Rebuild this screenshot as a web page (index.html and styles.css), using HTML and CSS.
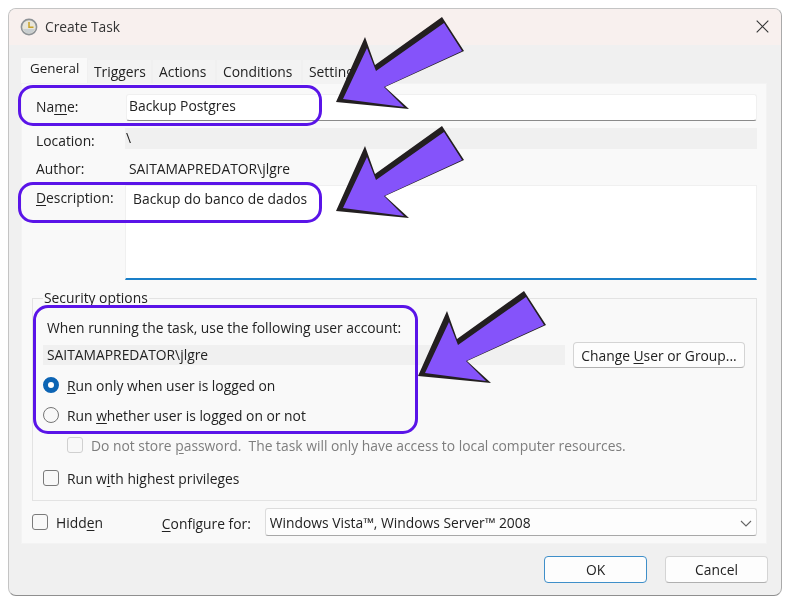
FILE: index.html
```html
<!DOCTYPE html>
<html lang="en">
<head>
<meta charset="utf-8">
<title>Create Task</title>
<link rel="stylesheet" href="styles.css">
</head>
<body>
<div class="window">
  <header class="titlebar">
    <svg class="clock" width="18" height="18" viewBox="0 0 18 18"><circle cx="9" cy="9" r="7.6" fill="#e9e6da" stroke="#8d9296" stroke-width="1.6"/><path d="M9 4v5.2h4.5" fill="none" stroke="#c9a227" stroke-width="1.5"/><path d="M3 11a6.4 6.4 0 0 0 12 0z" fill="#b9c3cc" opacity=".7"/></svg>
    <span class="title">Create Task</span>
    <svg class="close" width="13" height="13" viewBox="0 0 13 13"><path d="M.7.7l11.6 11.6M12.3.7L.7 12.3" stroke="#333" stroke-width="1.1" fill="none"/></svg>
  </header>
  <main class="content">
    <nav class="tabs">
      <span class="tab active">General</span>
      <span class="tab t2">Triggers</span>
      <span class="tab t3">Actions</span>
      <span class="tab t4">Conditions</span>
      <span class="tab t5">Settings</span>
    </nav>
    <section class="panel">
      <div class="row name-row">
        <label class="lab">Na<u>m</u>e:</label>
        <div class="input name-input">Backup Postgres</div>
      </div>
      <div class="row loc-row">
        <label class="lab">Location:</label>
        <div class="readonly">\</div>
      </div>
      <div class="row author-row">
        <label class="lab">Author:</label>
        <div class="plain">SAITAMAPREDATOR\jlgre</div>
      </div>
      <div class="row desc-row">
        <label class="lab desc-lab"><u>D</u>escription:</label>
        <div class="textarea">Backup do banco de dados</div>
      </div>
      <div class="group">
        <div class="legend">Security options</div>
        <div class="g-text">When running the task, use the following user account:</div>
        <div class="account">
          <div class="acc-field">SAITAMAPREDATOR\jlgre</div>
          <button class="btn change">Change <u>U</u>ser or Group...</button>
        </div>
        <div class="opt r1"><span class="radio on"></span><span><u>R</u>un only when user is logged on</span></div>
        <div class="opt r2"><span class="radio"></span><span>Run <u>w</u>hether user is logged on or not</span></div>
        <div class="opt r3 disabled"><span class="check dis"></span><span>Do not store <u>p</u>assword.&nbsp; The task will only have access to local computer resources.</span></div>
        <div class="opt r4"><span class="check"></span><span>Run w<u>i</u>th highest privileges</span></div>
      </div>
      <div class="bottom">
        <span class="check"></span>
        <span class="hidden-lab">Hidd<u>e</u>n</span>
        <label class="conf-lab"><u>C</u>onfigure for:</label>
        <div class="select">Windows Vista™, Windows Server™ 2008
          <svg class="chev" width="12" height="7" viewBox="0 0 12 7"><path d="M1 1l5 5 5-5" fill="none" stroke="#666" stroke-width="1.1"/></svg>
        </div>
      </div>
    </section>
    <footer class="actions">
      <button class="btn act default">OK</button>
      <button class="btn act">Cancel</button>
    </footer>
  </main>
</div>

<div class="mark m-name"></div>
<div class="mark m-desc"></div>
<div class="mark m-sec"></div>

<svg class="arrows" width="788" height="601" viewBox="0 0 788 601">
  <defs>
    <g id="arrow">
      <polygon points="336,102 365,37 375,65 442,17 464,51 385,87 409,109" fill="#231f20"/>
      <polygon points="343,99 367,48 376,71 444,23 462,51 384,87 404,107" fill="#8553fa"/>
    </g>
  </defs>
  <use href="#arrow"/>
  <use href="#arrow" y="109"/>
  <use href="#arrow" x="82" y="274"/>
</svg>
</body>
</html>
```
FILE: styles.css
```css
* { box-sizing: border-box; }
html, body { margin: 0; padding: 0; background: #fff; }
body {
  width: 788px; height: 601px; position: relative; overflow: hidden;
  font-family: "Open Sans", "Noto Sans", sans-serif; font-size: 13.85px; color: #222;
}
u { text-underline-offset: 2px; text-decoration-thickness: 1px; }
button { font: inherit; color: inherit; }

.window {
  margin: 8px 0 0 8px; width: 774px; height: 588px;
  border: 1px solid #c4c4c4; border-bottom-color: #8f8f8f; border-right-color: #aaa;
  border-radius: 8px; background: #f0f0f0; overflow: hidden;
  filter: blur(0.35px);
}
.titlebar {
  height: 36px; background: #f8f0ee; display: flex; align-items: center;
  padding: 0 12px 1px 11px;
}
.clock { display: block; }
.title { margin-left: 7px; font-size: 13.8px; color: #333; }
.close { margin-left: auto; }

.content { padding: 13px 0 0 12px; }
.tabs { display: flex; height: 25px; align-items: flex-end; }
.tab {
  height: 23px; padding-left: 6px; background: #f3f3f3; line-height: 23px;
  margin-right: 2px; white-space: nowrap;
}
.tab.active { width: 66px; height: 25px; padding-left: 9px; background: #f9f9f9; line-height: 21px; margin-right: 1px; font-size: 13.4px; }
.t2 { width: 63px; }
.t3 { width: 62px; }
.t4 { width: 84px; }
.t5 { width: 60px; }

.panel {
  width: 746px; height: 461px; background: #f9f9f9;
  border: 1px solid #f3f3f3; padding: 10px 9px 0 10px;
}
.row { display: flex; }
.lab { width: 94px; flex: none; padding-left: 4px; }
.name-row { height: 27px; align-items: center; }
.name-row .lab { padding-bottom: 2px; }
.input {
  width: 632px; height: 27px; background: #fff; border: 1px solid #f0f0f0;
  border-bottom: 1px solid #8a8a8a; border-radius: 3px; padding-left: 2px; line-height: 21px;
}
.loc-row { height: 21px; margin-top: 7px; align-items: center; }
.loc-row .lab { padding-top: 3px; }
.readonly { width: 633px; height: 21px; margin-left: -1px; background: #f0f0f0; line-height: 19px; padding-left: 1px; }
.author-row { height: 20px; margin-top: 9px; align-items: center; }
.plain { padding-left: 3px; }
.desc-row { margin-top: 7px; height: 95px; }
.desc-lab { padding-top: 3px; }
.textarea {
  width: 633px; height: 95px; margin-left: -1px; background: #fff; border: 1px solid #f0f0f0;
  border-bottom: 2px solid #1a7fc8; padding: 3px 0 0 7px;
}

.group {
  margin: 18px 0 0 0; width: 725px; height: 203px;
  border: 1px solid #e3e3e3; padding: 0 10px;
}
.legend {
  width: fit-content; height: 18px; margin-top: -10px; padding: 0 1px; background: #f9f9f9; line-height: 18px;
}
.g-text { margin-top: 12px; height: 18px; line-height: 18px; padding-left: 4px; }
.account { display: flex; align-items: center; height: 26px; margin-top: 5px; }
.acc-field { width: 522px; height: 20px; background: #f0f0f0; padding-left: 4px; line-height: 20px; }
.btn {
  background: #fdfdfd; border: 1px solid #d4d4d4; border-bottom-color: #b0b0b0; border-radius: 4px;
  padding: 0; text-align: center;
}
.change { width: 172px; height: 26px; margin-left: 8px; }
.opt { display: flex; align-items: center; height: 20px; white-space: nowrap; }
.r1 { margin-top: 7px; }
.r2 { margin-top: 10px; }
.r3 { margin-top: 10px; padding-left: 24px; }
.r4 { margin-top: 13px; }
.disabled { color: #7d7d7d; }
.radio {
  width: 16px; height: 16px; border-radius: 50%; border: 1px solid #767676; background: #f8f8f8;
  margin-right: 8px; flex: none;
}
.radio.on { border: 5px solid #0c64b4; background: #fff; }
.check {
  width: 16px; height: 16px; border: 1px solid #7a7a7a; border-radius: 3px; background: #f8f8f8;
  margin-right: 8px; flex: none;
}
.check.dis { border-color: #d0d0d0; }

.bottom { display: flex; align-items: center; height: 28px; margin-top: 7px; }
.hidden-lab { width: 106px; }
.conf-lab { width: 103px; padding-top: 2px; }
.select {
  width: 493px; height: 28px; background: #fdfdfd; border: 1px solid #dcdcdc;
  border-bottom-color: #a8a8a8; border-radius: 3px; padding-left: 4px; line-height: 27px; position: relative;
}
.chev { position: absolute; right: 4px; top: 11px; }

.actions { display: flex; justify-content: flex-end; gap: 18px; padding: 12px 13px 0 0; }
.act { width: 103px; height: 27px; }
.default { border: 1.5px solid #3f8fc9; }

.mark {
  position: absolute; border: 3px solid #5a14e8; border-radius: 15px; pointer-events: none;
}
.m-name { left: 18px; top: 85px; width: 304px; height: 41px; }
.m-desc { left: 18px; top: 182px; width: 304px; height: 41px; }
.m-sec { left: 33px; top: 305px; width: 385px; height: 129px; }
.arrows { position: absolute; left: 0; top: 0; pointer-events: none; }
```
